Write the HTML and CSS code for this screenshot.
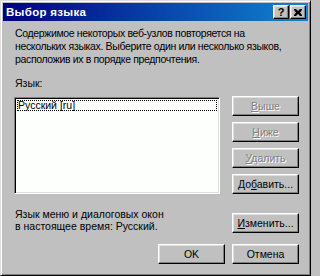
FILE: index.html
```html
<!DOCTYPE html>
<html lang="ru">
<head>
<meta charset="utf-8">
<title>Выбор языка</title>
<link rel="stylesheet" href="styles.css">
</head>
<body>
<div class="window">
  <div class="titlebar">
    <span class="title">Выбор языка</span>
    <div class="caption-btns">
      <span class="cbtn help">?</span>
      <span class="cbtn close"><svg width="8" height="7" viewBox="0 0 8 7"><path d="M0 0h2l2 2 2-2h2v1l-2 2.5 2 2.5v1h-2l-2-2-2 2h-2v-1l2-2.5-2-2.5z" fill="#000"/></svg></span>
    </div>
  </div>
  <div class="content">
    <p class="intro">Содержимое некоторых веб-узлов повторяется на нескольких языках. Выберите один или несколько языков, расположив их в порядке предпочтения.</p>
    <div class="label">Язык:</div>
    <div class="lang-row">
      <div class="listbox">
        <div class="item">Русский [ru]</div>
      </div>
      <div class="btncol">
        <button class="btn disabled"><u>В</u>ыше</button>
        <button class="btn disabled"><u>Н</u>иже</button>
        <button class="btn disabled"><u>У</u>далить</button>
        <button class="btn">До<u>б</u>авить...</button>
      </div>
    </div>
    <div class="ui-row">
      <p class="current">Язык меню и диалоговых окон в настоящее время: Русский.</p>
      <button class="btn change"><u>И</u>зменить...</button>
    </div>
    <div class="footer">
      <button class="btn">OK</button>
      <button class="btn">Отмена</button>
    </div>
  </div>
</div>
</body>
</html>
```
FILE: styles.css
```css
* { box-sizing: border-box; }
html, body { margin: 0; padding: 0; background: #c0c0c0; }
body { font-family: "Liberation Sans", Arial, sans-serif; font-size: 11px; color: #000; }

.window {
  width: 311px;
  height: 276px;
  background: #c0c0c0;
  border: 1px solid;
  border-color: #dfdfdf #000 #000 #dfdfdf;
  box-shadow: inset 1px 1px #fff, inset -1px -1px #808080;
  padding: 2px;
}

.titlebar {
  height: 18px;
  background: linear-gradient(to right, #000080, #1084d0);
  display: flex;
  align-items: center;
  justify-content: space-between;
  padding: 0 2px 0 3px;
}
.title {
  color: #fff;
  font-weight: bold;
  font-size: 11.5px;
  letter-spacing: 0.3px;
}
.caption-btns { display: flex; gap: 0; }
.cbtn {
  width: 16px;
  height: 14px;
  background: #c0c0c0;
  border: 1px solid;
  border-color: #fff #000 #000 #fff;
  box-shadow: inset -1px -1px #808080, inset 1px 1px #dfdfdf;
  display: flex;
  align-items: center;
  justify-content: center;
  font-weight: bold;
  font-size: 11px;
  line-height: 1;
}
.close { margin-left: 1px; }

.content { padding: 0 9px 0 11px; }

.intro {
  margin: 6px 0 0 1px;
  width: 276px;
  line-height: 13px;
  font-size: 10.5px;
  letter-spacing: -0.35px;
}
.label {
  margin: 11px 0 0 1px;
  line-height: 13px;
  font-size: 10.5px;
}

.lang-row {
  display: flex;
  align-items: flex-start;
  justify-content: space-between;
  margin-top: 6px;
}
.listbox {
  width: 206px;
  height: 97px;
  margin-top: 1px;
  background: #fcfffc;
  border: 1px solid;
  border-color: #808080 #fff #fff #808080;
  box-shadow: inset 1px 1px #000, inset -1px -1px #dfdfdf;
  padding: 2px 2px;
}
.item {
  outline: 1px dotted #000;
  outline-offset: -1px;
  height: 11px;
  line-height: 11px;
  font-size: 10.5px;
  padding-left: 1px;
}

.btncol {
  display: flex;
  flex-direction: column;
  gap: 6px;
}
.btn {
  width: 67px;
  height: 20px;
  padding: 0;
  background: #c0c0c0;
  border: 1px solid;
  border-color: #fff #000 #000 #fff;
  box-shadow: inset -1px -1px #808080, inset 1px 1px #dfdfdf;
  font-family: "Liberation Sans", Arial, sans-serif;
  font-size: 10.5px;
  color: #000;
  text-align: center;
}
.btn u { text-decoration: underline; text-underline-offset: 1px; }
.btn.disabled {
  color: #808080;
  text-shadow: 1px 1px #fff;
}

.ui-row {
  display: flex;
  align-items: flex-start;
  justify-content: space-between;
  margin-top: 14px;
}
.current {
  margin: 0 0 0 1px;
  width: 150px;
  line-height: 12px;
  font-size: 10.5px;
}
.change { margin-top: 5px; }

.footer {
  display: flex;
  justify-content: flex-end;
  gap: 7px;
  margin-top: 11px;
}
```
